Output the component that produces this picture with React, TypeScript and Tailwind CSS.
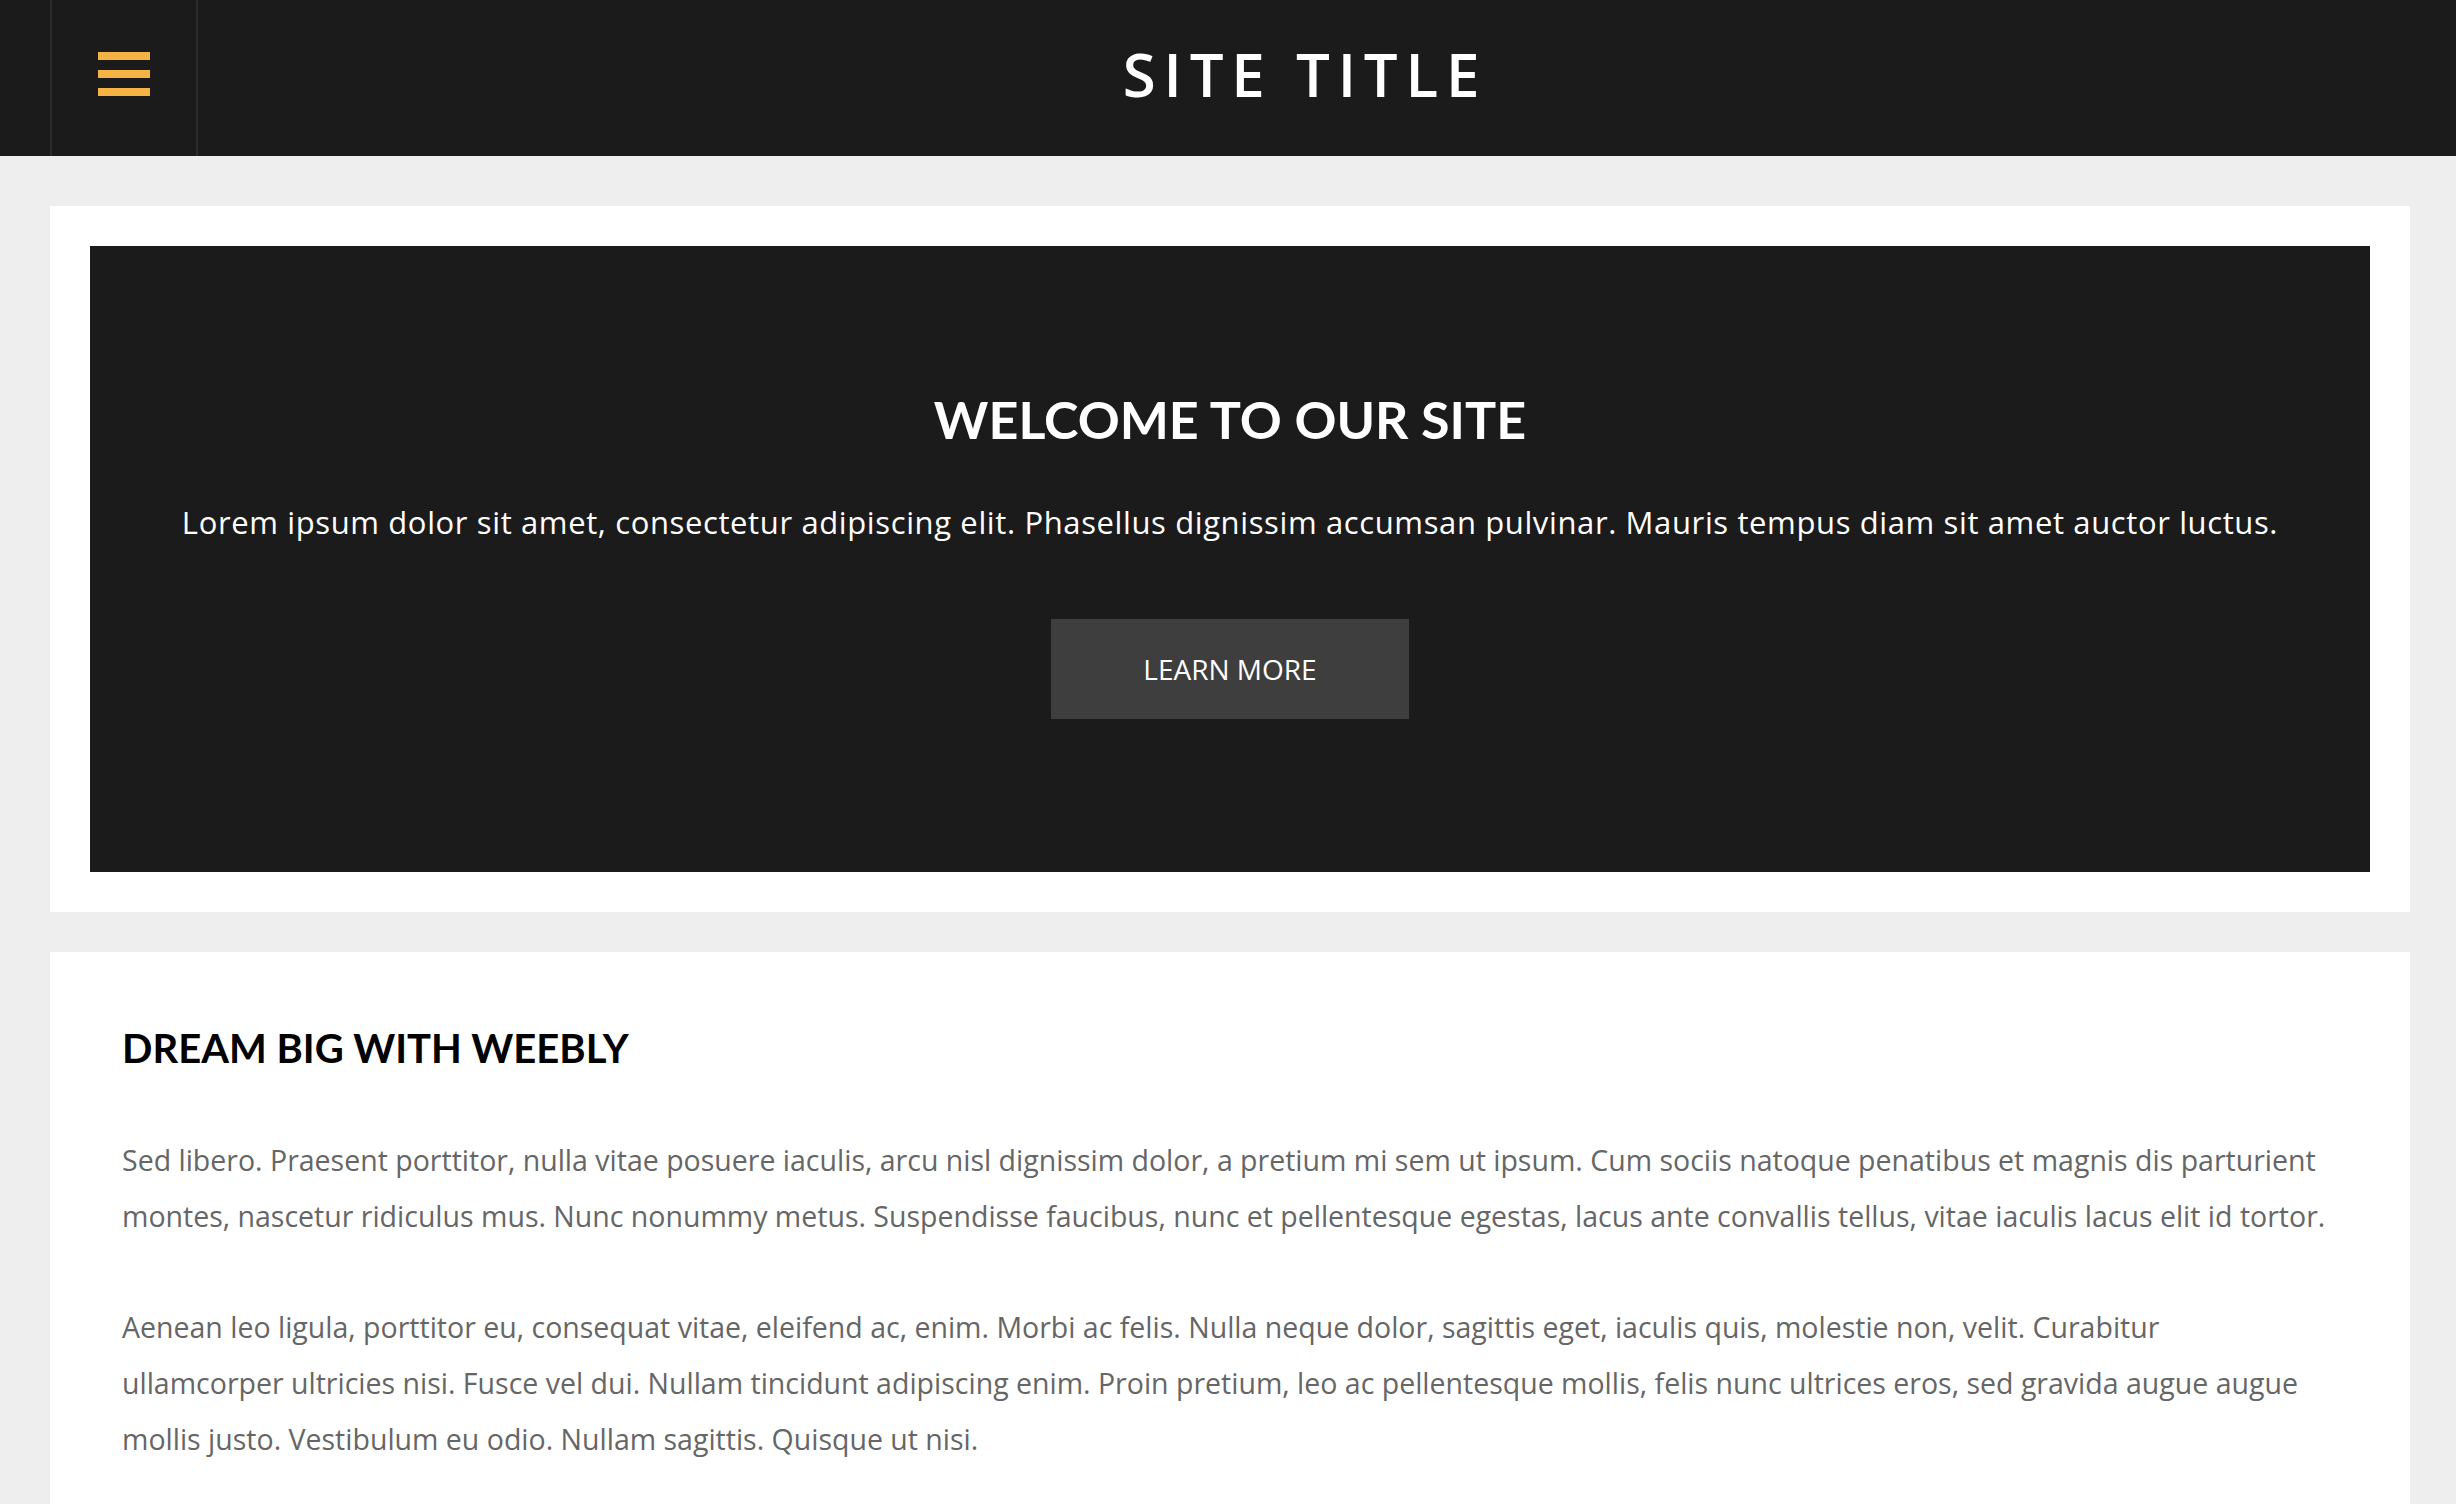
export default function App() {
  return (
    <div className="min-h-screen bg-[#eeeeee] font-['Lato',sans-serif]">
      {/* ── Header ─────────────────────────────────────────── */}
      <header className="flex h-[156px] bg-[#1b1b1b]">
        <button
          type="button"
          aria-label="Menu"
          className="ml-[50px] flex w-[148px] items-center justify-center border-x-2 border-[#2c2c2c] pb-2"
        >
          <span className="flex flex-col gap-[10px]">
            <span className="block h-[8px] w-[52px] bg-[#f5b245]" />
            <span className="block h-[8px] w-[52px] bg-[#f5b245]" />
            <span className="block h-[8px] w-[52px] bg-[#f5b245]" />
          </span>
        </button>
        <div className="flex flex-1 items-center justify-center pr-[44px] pb-2">
          <h1 className="font-['Open_Sans',sans-serif] text-[60px] font-semibold tracking-[0.13em] text-white">
            SITE TITLE
          </h1>
        </div>
      </header>

      {/* ── Content ────────────────────────────────────────── */}
      <main className="flex flex-col gap-[40px] pt-[50px] pl-[50px] pr-[46px]">
        {/* Hero card */}
        <section className="bg-white p-[40px]">
          <div className="flex flex-col items-center bg-[#1b1b1b] px-[40px] pt-[142px] pb-[153px] text-center">
            <h2 className="text-[52px] leading-[1.2] font-bold text-white">WELCOME TO OUR SITE</h2>
            <p className="mt-[48px] font-['Open_Sans',sans-serif] text-[31px] leading-[48px] tracking-[0.02em] text-white">
              Lorem ipsum dolor sit amet, consectetur adipiscing elit. Phasellus dignissim accumsan pulvinar. Mauris tempus diam sit amet auctor luctus.
            </p>
            <a
              href="#"
              className="mt-[73px] flex h-[100px] w-[358px] items-center justify-center bg-[#3e3e3e] font-['Open_Sans',sans-serif] text-[28px] text-white"
            >
              LEARN MORE
            </a>
          </div>
        </section>

        {/* Text card */}
        <section className="bg-white px-[72px] pt-[72px] pb-[72px]">
          <h2 className="text-[40px] leading-[1.2] font-bold text-black">DREAM BIG WITH WEEBLY</h2>
          <div className="mt-[60px] flex flex-col gap-[55px] font-['Open_Sans',sans-serif] text-[28.5px] leading-[56px] text-[#666666]">
            <p>
              Sed libero. Praesent porttitor, nulla vitae posuere iaculis, arcu nisl dignissim dolor, a pretium mi sem ut ipsum. Cum sociis natoque penatibus et magnis dis parturient
              <br />
              montes, nascetur ridiculus mus. Nunc nonummy metus. Suspendisse faucibus, nunc et pellentesque egestas, lacus ante convallis tellus, vitae iaculis lacus elit id tortor.
            </p>
            <p>
              Aenean leo ligula, porttitor eu, consequat vitae, eleifend ac, enim. Morbi ac felis. Nulla neque dolor, sagittis eget, iaculis quis, molestie non, velit. Curabitur
              <br />
              ullamcorper ultricies nisi. Fusce vel dui. Nullam tincidunt adipiscing enim. Proin pretium, leo ac pellentesque mollis, felis nunc ultrices eros, sed gravida augue augue
              <br />
              mollis justo. Vestibulum eu odio. Nullam sagittis. Quisque ut nisi.
            </p>
          </div>
        </section>
      </main>
    </div>
  );
}
